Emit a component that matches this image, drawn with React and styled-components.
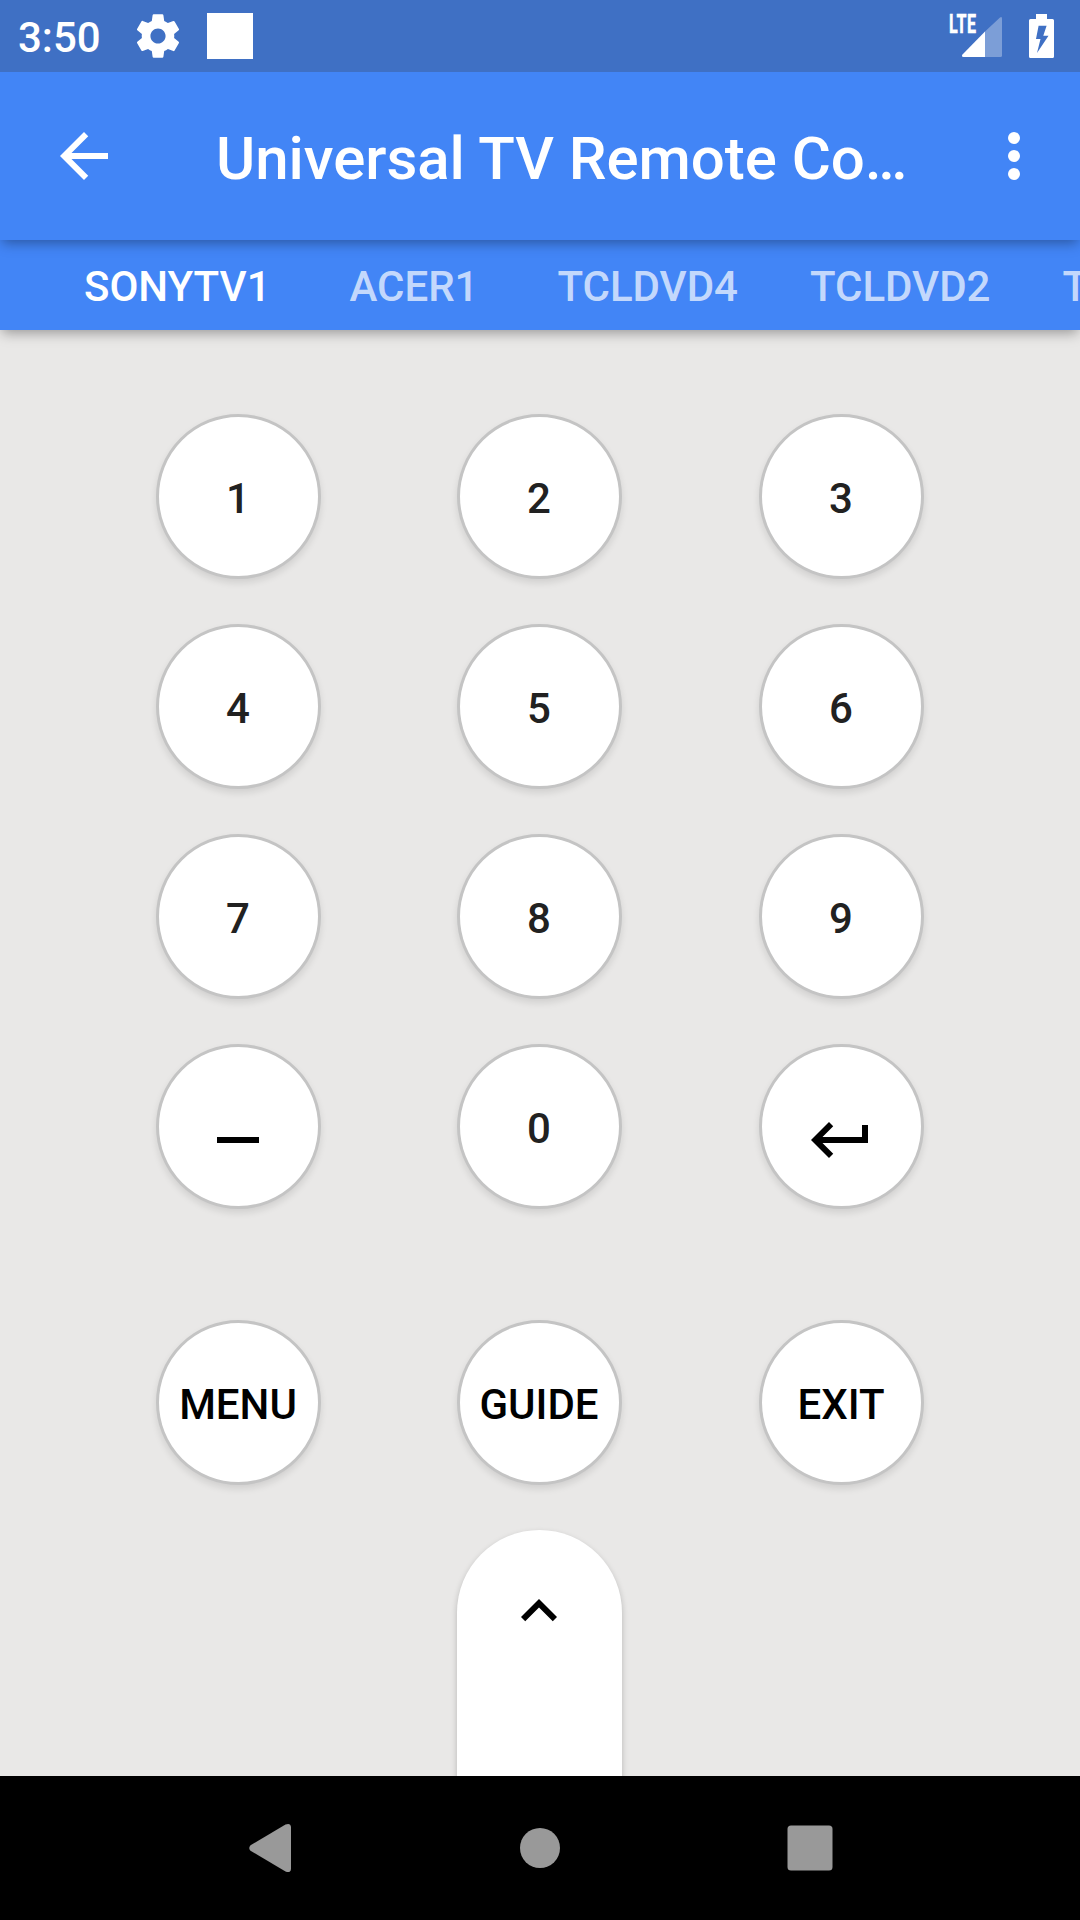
import React, { useState } from 'react';
import styled, { createGlobalStyle } from 'styled-components';

const TABS = ['SONYTV1', 'ACER1', 'TCLDVD4', 'TCLDVD2', 'TCLDVD1'];

const DashIcon = () => (
  <svg width="72" height="72" viewBox="0 0 24 24" fill="currentColor">
    <path d="M19 13H5v-2h14v2z" />
  </svg>
);

const ReturnIcon = () => (
  <svg width="72" height="72" viewBox="0 0 24 24" fill="currentColor">
    <path d="M19 7v4H5.83l3.58-3.59L8 6l-6 6 6 6 1.41-1.41L5.83 13H21V7z" />
  </svg>
);

const NUMBER_KEYS = [
  { id: '1', label: '1' },
  { id: '2', label: '2' },
  { id: '3', label: '3' },
  { id: '4', label: '4' },
  { id: '5', label: '5' },
  { id: '6', label: '6' },
  { id: '7', label: '7' },
  { id: '8', label: '8' },
  { id: '9', label: '9' },
  { id: 'dash', icon: <DashIcon /> },
  { id: '0', label: '0' },
  { id: 'enter', icon: <ReturnIcon /> },
];

const ACTION_KEYS = ['MENU', 'GUIDE', 'EXIT'];

const StatusIcons = () => (
  <StatusRight>
    <Signal>
      <NetworkType>LTE</NetworkType>
      <svg width="54" height="72" viewBox="0 0 54 72">
        <path d="M37 31.5V57h15.5q1.5 0 1.5-1.5V18.5q0-2.5-2-1z" fill="#fff" fillOpacity="0.32" />
        <path d="M37 31.5V57H15.5q-2.5-.5-1-2.5z" fill="#fff" />
      </svg>
    </Signal>
    <svg width="25" height="44" viewBox="0 0 25 44">
      <path
        d="M7 0h11v5h5.5q1.5 0 1.5 1.5v36q0 1.5-1.5 1.5h-22Q0 44 0 42.5v-36Q0 5 1.5 5H7zM9.6 11.8L7 25h4.5L8 39l11.5-17.2h-5.2l3.3-10z"
        fill="#fff"
        fillRule="evenodd"
      />
    </svg>
  </StatusRight>
);

const App = () => {
  const [activeTab, setActiveTab] = useState('SONYTV1');

  return (
    <Screen>
      <GlobalStyle />
      <StatusBar>
        <Clock>3:50</Clock>
        <svg width="52" height="52" viewBox="0 0 24 24" fill="#fff">
          <path d="M19.43 12.98c.04-.32.07-.64.07-.98s-.03-.66-.07-.98l2.11-1.65c.19-.15.24-.42.12-.64l-2-3.46c-.12-.22-.39-.3-.61-.22l-2.49 1c-.52-.4-1.08-.73-1.69-.98l-.38-2.65C14.46 2.18 14.25 2 14 2h-4c-.25 0-.46.18-.49.42l-.38 2.65c-.61.25-1.17.59-1.69.98l-2.49-1c-.23-.09-.49 0-.61.22l-2 3.46c-.13.22-.07.49.12.64l2.11 1.65c-.04.32-.07.65-.07.98s.03.66.07.98l-2.11 1.65c-.19.15-.24.42-.12.64l2 3.46c.12.22.39.3.61.22l2.49-1c.52.4 1.08.73 1.69.98l.38 2.65c.03.24.24.42.49.42h4c.25 0 .46-.18.49-.42l.38-2.65c.61-.25 1.17-.59 1.69-.98l2.49 1c.23.09.49 0 .61-.22l2-3.46c.12-.22.07-.49-.12-.64l-2.11-1.65zM12 15.5c-1.93 0-3.5-1.57-3.5-3.5s1.57-3.5 3.5-3.5 3.5 1.57 3.5 3.5-1.57 3.5-3.5 3.5z" />
        </svg>
        <AppSquare />
        <StatusIcons />
      </StatusBar>

      <AppBar>
        <IconButton aria-label="Back">
          <svg width="72" height="72" viewBox="0 0 24 24" fill="#fff">
            <path d="M20 11H7.83l5.59-5.59L12 4l-8 8 8 8 1.41-1.41L7.83 13H20v-2z" />
          </svg>
        </IconButton>
        <Title>Universal TV Remote Co…</Title>
        <IconButton aria-label="More options">
          <svg width="72" height="72" viewBox="0 0 24 24" fill="#fff">
            <circle cx="12" cy="6" r="2" />
            <circle cx="12" cy="12" r="2" />
            <circle cx="12" cy="18" r="2" />
          </svg>
        </IconButton>
      </AppBar>

      <TabBar>
        {TABS.map((tab) => (
          <Tab key={tab} $active={tab === activeTab} onClick={() => setActiveTab(tab)}>
            {tab}
          </Tab>
        ))}
      </TabBar>

      <Remote>
        <KeyGrid>
          {NUMBER_KEYS.map((key) => (
            <RoundKey key={key.id} $color="#212121">
              {key.icon ? <KeyIcon>{key.icon}</KeyIcon> : <KeyLabel>{key.label}</KeyLabel>}
            </RoundKey>
          ))}
        </KeyGrid>
        <ActionGrid>
          {ACTION_KEYS.map((label) => (
            <RoundKey key={label} $color="#000">
              <KeyLabel>{label}</KeyLabel>
            </RoundKey>
          ))}
        </ActionGrid>
        <Rocker aria-label="Up">
          <svg width="72" height="72" viewBox="0 0 24 24" fill="#000">
            <path d="M7.41 15.41L12 10.83l4.59 4.58L18 14l-6-6-6 6z" />
          </svg>
        </Rocker>
      </Remote>

      <NavBar>
        <svg width="48" height="50" viewBox="0 0 48 50" fill="#999">
          <path d="M4.5 22.2Q2 25 4.5 27.8L39.5 48.5Q44.5 50.5 45 46V4Q44.5-.5 39.5 1.5z" />
        </svg>
        <svg width="40" height="40" viewBox="0 0 40 40" fill="#999">
          <circle cx="20" cy="20" r="20" />
        </svg>
        <svg width="46" height="46" viewBox="0 0 46 46" fill="#999">
          <rect x="0.5" y="0.5" width="45" height="45" rx="3.5" />
        </svg>
      </NavBar>
    </Screen>
  );
};

const GlobalStyle = createGlobalStyle`
  * {
    box-sizing: border-box;
  }

  body {
    margin: 0;
    font-family: Roboto, sans-serif;
  }

  svg {
    display: block;
    flex-shrink: 0;
  }

  button {
    padding: 0;
    border: none;
    background: none;
    font-family: inherit;
    cursor: pointer;
  }
`;

const Screen = styled.div`
  display: flex;
  flex-direction: column;
  width: 1080px;
  height: 1920px;
  overflow: hidden;
  background: #e9e8e7;
`;

const StatusBar = styled.div`
  position: relative;
  z-index: 3;
  display: flex;
  align-items: center;
  height: 72px;
  flex-shrink: 0;
  padding: 0 26px 0 18px;
  background: #3f70c4;
  color: #fff;
`;

const Clock = styled.span`
  width: 114px;
  padding-top: 3px;
  font-size: 42px;
  font-weight: 500;
  line-height: 48px;
`;

const AppSquare = styled.div`
  width: 46px;
  height: 46px;
  margin-left: 23px;
  background: #fff;
`;

const StatusRight = styled.div`
  display: flex;
  align-items: center;
  gap: 27px;
  margin-left: auto;
`;

const Signal = styled.div`
  position: relative;
`;

const NetworkType = styled.span`
  position: absolute;
  top: 9px;
  left: 1px;
  font-size: 26px;
  font-weight: 800;
  letter-spacing: 0.8px;
  line-height: 30px;
  transform: scaleX(0.62);
  transform-origin: left;
  -webkit-text-stroke: 0.3px #fff;
`;

const AppBar = styled.header`
  position: relative;
  z-index: 2;
  display: flex;
  align-items: center;
  height: 168px;
  flex-shrink: 0;
  padding: 0 30px 0 48px;
  background: #4285f6;
  box-shadow: 0 5px 12px -2px rgba(0, 0, 0, 0.35);
`;

const IconButton = styled.button`
  width: 72px;
  height: 72px;
`;

const Title = styled.h1`
  flex: 1;
  margin: 0 48px 0 96px;
  padding-top: 5px;
  color: #fff;
  font-size: 60px;
  font-weight: 500;
  letter-spacing: -0.05px;
  line-height: 72px;
  white-space: nowrap;
`;

const TabBar = styled.nav`
  position: relative;
  z-index: 1;
  display: flex;
  height: 90px;
  flex-shrink: 0;
  padding-left: 48px;
  background: #4285f6;
  box-shadow: 0 5px 12px -2px rgba(0, 0, 0, 0.35);
`;

const Tab = styled.button`
  flex-shrink: 0;
  min-width: 215px;
  padding: 3px 36px 0;
  color: ${(props) => (props.$active ? '#fff' : 'rgba(255, 255, 255, 0.7)')};
  font-size: 42px;
  font-weight: 500;
`;

const Remote = styled.main`
  display: flex;
  flex: 1;
  flex-direction: column;
  align-items: center;
  min-height: 0;
  padding-top: 84px;
  overflow: hidden;
`;

const KeyGrid = styled.div`
  display: grid;
  grid-template-columns: 301px 302px 165px;
  grid-auto-rows: 165px;
  row-gap: 45px;
`;

const ActionGrid = styled(KeyGrid)`
  margin-top: 111px;
`;

const RoundKey = styled.button`
  display: flex;
  align-items: center;
  justify-content: center;
  width: 165px;
  border: 3px solid #c4c4c4;
  border-radius: 50%;
  background: #fff;
  box-shadow: 0 4px 7px rgba(0, 0, 0, 0.1);
  color: ${(props) => props.$color};
`;

const KeyLabel = styled.span`
  padding: 4px 1px 0 0;
  font-size: 42px;
  font-weight: 500;
  line-height: 48px;
`;

const KeyIcon = styled.span`
  padding: 27px 1px 0 0;
  color: #000;
`;

const Rocker = styled.button`
  display: flex;
  flex-shrink: 0;
  justify-content: center;
  width: 165px;
  height: 400px;
  margin: 45px 1px 0 0;
  padding: 45px 1px 0 0;
  border-radius: 83px;
  background: #fff;
  box-shadow: 0 3px 6px rgba(0, 0, 0, 0.22);
`;

const NavBar = styled.footer`
  display: grid;
  grid-template-columns: repeat(3, 270px);
  align-items: center;
  justify-content: center;
  justify-items: center;
  height: 144px;
  flex-shrink: 0;
  background: #000;
`;

export default App;
